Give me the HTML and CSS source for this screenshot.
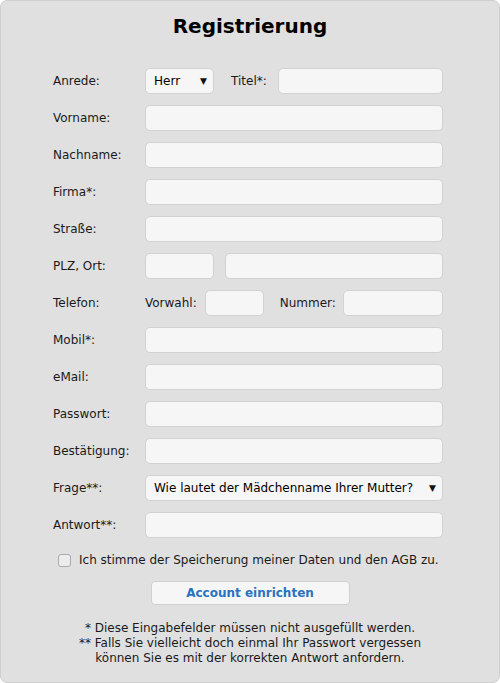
FILE: index.html
```html
<!DOCTYPE html>
<html lang="de">
<head>
<meta charset="utf-8">
<title>Registrierung</title>
<link rel="stylesheet" href="styles.css">
</head>
<body>
<div class="panel">
  <h1 class="title">Registrierung</h1>
  <form class="form">
    <div class="row">
      <label class="lbl">Anrede:</label>
      <div class="fields">
        <div class="select sel-small"><span>Herr</span><span class="arrow">▼</span></div>
        <span class="sub sub-titel">Titel*:</span>
        <div class="input grow"></div>
      </div>
    </div>
    <div class="row"><label class="lbl">Vorname:</label><div class="fields"><div class="input grow"></div></div></div>
    <div class="row"><label class="lbl">Nachname:</label><div class="fields"><div class="input grow"></div></div></div>
    <div class="row"><label class="lbl">Firma*:</label><div class="fields"><div class="input grow"></div></div></div>
    <div class="row"><label class="lbl">Straße:</label><div class="fields"><div class="input grow"></div></div></div>
    <div class="row">
      <label class="lbl">PLZ, Ort:</label>
      <div class="fields">
        <div class="input plz"></div>
        <div class="input grow ort"></div>
      </div>
    </div>
    <div class="row">
      <label class="lbl">Telefon:</label>
      <div class="fields">
        <span class="sub">Vorwahl:</span>
        <div class="input vorwahl"></div>
        <span class="sub sub-nummer">Nummer:</span>
        <div class="input grow"></div>
      </div>
    </div>
    <div class="row"><label class="lbl">Mobil*:</label><div class="fields"><div class="input grow"></div></div></div>
    <div class="row"><label class="lbl">eMail:</label><div class="fields"><div class="input grow"></div></div></div>
    <div class="row"><label class="lbl">Passwort:</label><div class="fields"><div class="input grow"></div></div></div>
    <div class="row"><label class="lbl">Bestätigung:</label><div class="fields"><div class="input grow"></div></div></div>
    <div class="row">
      <label class="lbl">Frage**:</label>
      <div class="fields">
        <div class="select grow"><span>Wie lautet der Mädchenname Ihrer Mutter?</span><span class="arrow">▼</span></div>
      </div>
    </div>
    <div class="row"><label class="lbl">Antwort**:</label><div class="fields"><div class="input grow"></div></div></div>
  </form>
  <div class="agree"><span class="check"></span><span>Ich stimme der Speicherung meiner Daten und den AGB zu.</span></div>
  <div class="actions"><button class="btn" type="button">Account einrichten</button></div>
  <p class="notes">* Diese Eingabefelder müssen nicht ausgefüllt werden.<br>** Falls Sie vielleicht doch einmal Ihr Passwort vergessen<br>können Sie es mit der korrekten Antwort anfordern.</p>
</div>
</body>
</html>
```
FILE: styles.css
```css
html, body {
  margin: 0;
  padding: 0;
  background: #ffffff;
}
body {
  font-family: "DejaVu Sans", Verdana, sans-serif;
  font-size: 12px;
  color: #1a1a1a;
}
.panel {
  box-sizing: border-box;
  width: 500px;
  height: 683px;
  background: #e0e0e0;
  border: 1px solid #cfcfcf;
  border-radius: 7px;
  padding: 12px 56px 0 52px;
}
.title {
  margin: 0;
  text-align: center;
  font-size: 20px;
  line-height: 26px;
  font-weight: bold;
  color: #000;
  padding-left: 4px;
}
.form {
  margin-top: 29px;
  display: flex;
  flex-direction: column;
  gap: 11px;
}
.row {
  display: grid;
  grid-template-columns: 92px 1fr;
  align-items: center;
  height: 26px;
}
.lbl {
  line-height: 26px;
}
.fields {
  display: flex;
  align-items: center;
  height: 26px;
}
.input, .select {
  box-sizing: border-box;
  height: 26px;
  background: #f6f6f6;
  border: 1px solid #d2d2d2;
  border-radius: 5px;
}
.grow { flex: 1; }
.select {
  display: flex;
  align-items: center;
  justify-content: space-between;
  padding: 0 6px 0 8px;
  color: #000;
  font-size: 12px;
}
.arrow {
  font-size: 9px;
  color: #111;
}
.sel-small { width: 69px; }
.sub { white-space: nowrap; }
.sub-titel { margin-left: 17px; margin-right: 11px; }
.plz { width: 69px; }
.ort { margin-left: 11px; }
.vorwahl { width: 59px; margin-left: 8px; }
.sub-nummer { margin-left: 16px; margin-right: 7px; }
.agree {
  margin-top: 15px;
  display: flex;
  align-items: center;
  gap: 8px;
  padding-left: 5px;
  font-size: 12px;
}
.check {
  box-sizing: border-box;
  width: 13px;
  height: 13px;
  border: 1px solid #a9a9a9;
  border-radius: 3px;
  background: #ececec;
}
.actions {
  margin-top: 14px;
  display: flex;
  justify-content: center;
  padding-left: 4px;
}
.btn {
  box-sizing: border-box;
  width: 199px;
  height: 24px;
  background: #f6f6f6;
  border: 1px solid #d0d0d0;
  border-radius: 4px;
  font-family: "DejaVu Sans", Verdana, sans-serif;
  font-size: 12px;
  font-weight: bold;
  color: #2a72c0;
  padding: 0;
}
.notes {
  margin: 16px 0 0 0;
  text-align: center;
  line-height: 15px;
  font-size: 12px;
  padding-left: 4px;
}
```
